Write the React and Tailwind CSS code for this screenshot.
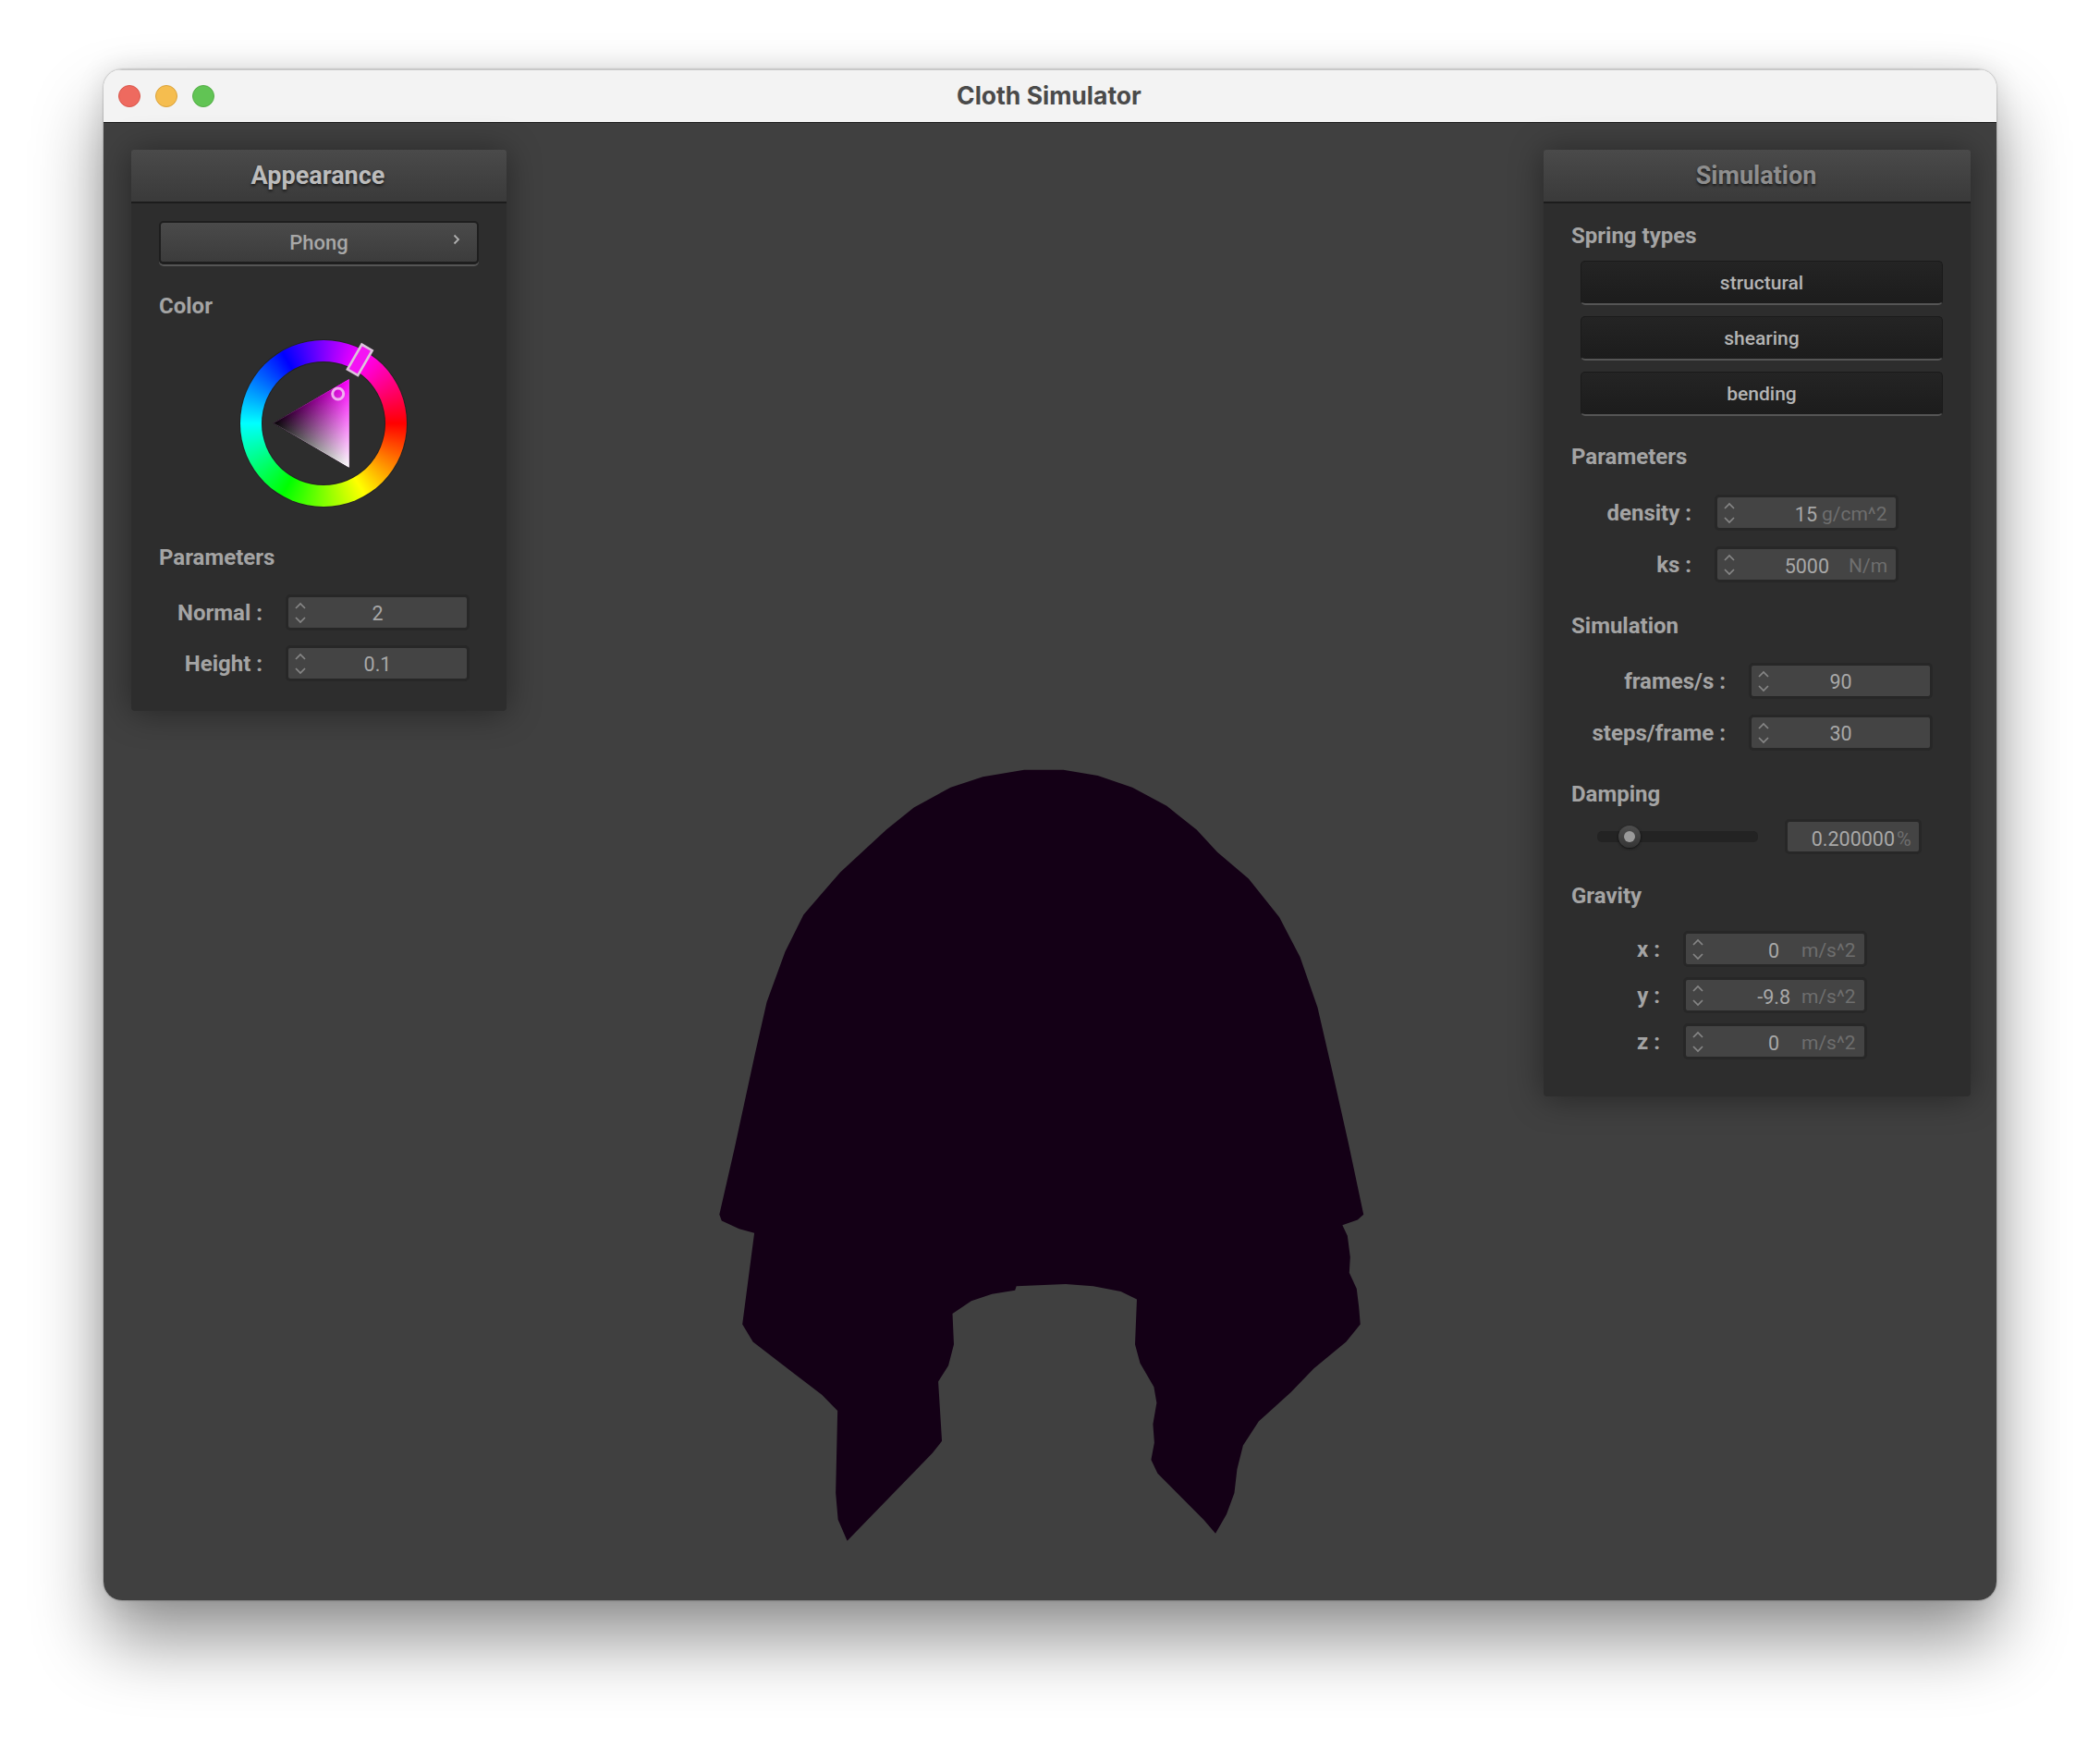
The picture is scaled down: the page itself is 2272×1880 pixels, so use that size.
const clothPoints =
  "740,57 825,57 900,68 975,90 1050,125 1115,170 1160,212 1228,262 1295,335 1340,410 1378,505 1410,625 1445,760 1478,895 1465,905 1432,915 1443,935 1449,975 1447,1005 1463,1035 1468,1070 1471,1102 1440,1135 1370,1185 1320,1230 1250,1285 1216,1330 1203,1375 1197,1420 1180,1460 1156,1496 1130,1470 1030,1383 1016,1357 1023,1325 1020,1290 1028,1250 1022,1220 992,1175 981,1140 985,1055 950,1040 890,1030 830,1026 723,1030 720,1038 670,1045 625,1058 584,1082 587,1140 575,1180 553,1210 561,1322 540,1345 355,1510 335,1470 330,1420 334,1265 300,1235 240,1195 150,1135 127,1102 153,930 120,922 82,907 77,895 110,770 155,590 180,495 220,400 260,330 295,295 340,250 440,170 500,128 580,90 650,70";

function Heading({ children, className = "" }) {
  return <div className={`h-[30px] leading-[30px] text-[24px] font-bold text-[#a4a4a4] ${className}`}>{children}</div>;
}

function PanelHeader({ children, dim }) {
  return (
    <div className="h-[58px] border-b-2 border-[#1c1c1c] rounded-t-[3px] bg-gradient-to-b from-[#4a4a4a] to-[#3a3a3a] flex items-center justify-center pr-[2px]">
      <span className={`text-[27px] font-bold [text-shadow:0_2px_3px_rgba(0,0,0,0.6)] ${dim ? "text-[#8e8e8e]" : "text-[#bcbcbc]"}`}>
        {children}
      </span>
    </div>
  );
}

function Spinner() {
  return (
    <svg className="absolute left-[6px] top-[4px]" width="14" height="26" viewBox="0 0 14 26" fill="none" stroke="#868686" strokeWidth="1.7">
      <path d="M2 8l5-5 5 5" />
      <path d="M2 18l5 5 5-5" />
    </svg>
  );
}

function Field({ children }) {
  return (
    <div className="relative h-[39px] w-[199px] shrink-0 rounded-[5px] border-[3px] border-[#272727] bg-[#444444] flex items-center text-[21.5px] text-[#a8a8a8] leading-none">
      <Spinner />
      {children}
    </div>
  );
}

function Centered({ value }) {
  return (
    <Field>
      <span className="w-full text-center pt-[3px]">{value}</span>
    </Field>
  );
}

function UnitField({ value, unit, valueEnd, unitStart }) {
  return (
    <Field>
      <span className="absolute top-[8px] text-right" style={{ right: valueEnd }}>{value}</span>
      <span className="absolute top-[8px] text-[21px] text-[#6e6e6e]" style={{ left: unitStart }}>{unit}</span>
    </Field>
  );
}

function Row({ label, labelWidth, gap, className = "", children }) {
  return (
    <div className={`flex items-center ${gap} ${className}`}>
      <div className={`${labelWidth} text-right text-[24px] font-bold text-[#a4a4a4] leading-[30px] whitespace-pre`}>{label}</div>
      {children}
    </div>
  );
}

function SpringButton({ children, className = "" }) {
  return (
    <div className={`ml-[10px] w-[392px] h-[48px] pt-[2px] rounded-[5px] border border-[#1a1a1a] border-b-2 border-b-[#555555] bg-gradient-to-b from-[#242424] to-[#1c1c1c] flex items-center justify-center text-[21px] font-medium text-[#b4b4b4] ${className}`}>
      {children}
    </div>
  );
}

function ColorWheel() {
  const triangle = "117.7,42 117.7,137.7 35.7,89.7";
  return (
    <div className="relative ml-[87px] mt-[22px] w-[180px] h-[180px] rounded-full bg-[conic-gradient(from_90deg,#ff0000,#ffff00,#00ff00,#00ffff,#0000ff,#ff00ff,#ff0000)] shadow-[0_0_0_1px_#222222]">
      <div className="absolute left-[24px] top-[24px] w-[132px] h-[132px] rounded-full bg-[#2d2d2d] shadow-[0_0_0_1px_#222222]" />
      <svg className="absolute left-0 top-0 isolate overflow-visible" width="180" height="180" viewBox="0 0 180 180">
        <defs>
          <linearGradient id="hue" gradientUnits="userSpaceOnUse" x1="117.7" y1="42" x2="76.7" y2="113.7">
            <stop offset="0" stopColor="#ff00ff" />
            <stop offset="1" stopColor="#000000" />
          </linearGradient>
          <linearGradient id="white" gradientUnits="userSpaceOnUse" x1="117.7" y1="137.7" x2="76.7" y2="65.9">
            <stop offset="0" stopColor="#ffffff" />
            <stop offset="1" stopColor="#000000" />
          </linearGradient>
        </defs>
        <polygon points={triangle} fill="#000000" stroke="#3a2a3a" strokeWidth="1" />
        <polygon points={triangle} fill="url(#hue)" className="mix-blend-plus-lighter" />
        <polygon points={triangle} fill="url(#white)" className="mix-blend-plus-lighter" />
        <circle cx="105.7" cy="58" r="6" fill="none" stroke="#f0b0f0" strokeWidth="3" />
        <g transform="translate(129.3 21.3) rotate(30)">
          <rect x="-6.5" y="-15.5" width="13" height="31" fill="#f414f4" stroke="#dcc4dc" strokeWidth="2.6" />
        </g>
      </svg>
    </div>
  );
}

function Slider() {
  return (
    <div className="relative w-[174px] h-[12px] ml-[28px] rounded-[5px] bg-[#232323]">
      <div className="absolute left-[23px] top-[-6px] w-[24px] h-[24px] rounded-full bg-gradient-to-b from-[#4e4e4e] to-[#353535] shadow-[0_1px_3px_rgba(0,0,0,0.7)] flex items-center justify-center">
        <div className="w-[12px] h-[12px] rounded-full bg-[#9a9a9a]" />
      </div>
    </div>
  );
}

export default function App() {
  return (
    <div className="w-[2272px] h-[1880px] bg-white overflow-hidden pt-[75px] pl-[112px] font-['Roboto',sans-serif]">
      <div className="w-[2048px] h-[1656px] rounded-[20px] shadow-[0_44px_76px_rgba(0,0,0,0.42),0_0_30px_rgba(0,0,0,0.12),0_0_2px_rgba(0,0,0,0.45)] overflow-hidden flex flex-col">
        <div className="relative h-[58px] shrink-0 bg-[#f3f3f3] border-t border-t-[#c8c8c8] border-b border-b-[#1a1a1a] flex items-center pl-[16px] gap-[16px]">
          <div className="w-[24px] h-[24px] rounded-full bg-[#ee6a5f] border border-[#d8574c]" />
          <div className="w-[24px] h-[24px] rounded-full bg-[#f5bd4f] border border-[#d9a23c]" />
          <div className="w-[24px] h-[24px] rounded-full bg-[#61c454] border border-[#54ad47]" />
          <div className="absolute inset-x-0 top-[11px] pr-[2px] text-center text-[26.5px] leading-[32px] font-bold text-[#4a4a4a] font-['Inter',sans-serif]">
            Cloth Simulator
          </div>
        </div>

        <div className="relative flex-1 bg-[#404040]">
          <svg className="absolute left-[628px] top-[667px]" width="780" height="900" viewBox="0 0 1568 1568" preserveAspectRatio="none">
            <polygon points={clothPoints} fill="#140016" />
          </svg>

          {/* Appearance window */}
          <div className="absolute left-[30px] top-[29px] w-[406px] rounded-[4px] bg-[#2d2d2d] shadow-[0_2px_36px_rgba(0,0,0,0.42)] pb-[32px]">
            <PanelHeader>Appearance</PanelHeader>
            <div className="pl-[30px]">
              <div className="relative mt-[19px] w-[346px] h-[47px] rounded-[5px] border-2 border-[#1e1e1e] border-b-[3px] bg-gradient-to-b from-[#4a4a4a] to-[#3c3c3c] shadow-[0_2px_0_#555555] flex items-center justify-center text-[22px] font-medium text-[#a8a8a8]">
                Phong
                <svg className="absolute right-[17px] top-[11px]" width="10" height="14" viewBox="0 0 10 14" fill="none" stroke="#b0b0b0" strokeWidth="1.8">
                  <path d="M2.5 2.5l4.5 4.5-4.5 4.5" />
                </svg>
              </div>
              <Heading className="mt-[30px]">Color</Heading>
              <div className="pl-[1px]">
                <ColorWheel />
              </div>
              <Heading className="mt-[40px]">Parameters</Heading>
              <Row label="Normal :" labelWidth="w-[112px]" gap="gap-[25px]" className="mt-[25px]">
                <Centered value="2" />
              </Row>
              <Row label="Height :" labelWidth="w-[112px]" gap="gap-[25px]" className="mt-[16px]">
                <Centered value="0.1" />
              </Row>
            </div>
          </div>

          {/* Simulation window */}
          <div className="absolute right-[28px] top-[29px] w-[462px] rounded-[4px] bg-[#2d2d2d] shadow-[0_2px_36px_rgba(0,0,0,0.42)] pb-[40px]">
            <PanelHeader dim>Simulation</PanelHeader>
            <div className="pl-[30px]">
              <Heading className="mt-[20px]">Spring types</Heading>
              <SpringButton className="mt-[12px]">structural</SpringButton>
              <SpringButton className="mt-[12px]">shearing</SpringButton>
              <SpringButton className="mt-[12px]">bending</SpringButton>
              <Heading className="mt-[29px]">Parameters</Heading>
              <Row label="density :" labelWidth="w-[130px]" gap="gap-[25px]" className="mt-[26px]">
                <UnitField value="15" unit="g/cm^2" valueEnd="85px" unitStart="113px" />
              </Row>
              <Row label="ks :" labelWidth="w-[130px]" gap="gap-[25px]" className="mt-[17px]">
                <UnitField value="5000" unit="N/m" valueEnd="72px" unitStart="142px" />
              </Row>
              <Heading className="mt-[32px]">Simulation</Heading>
              <Row label="frames/s :" labelWidth="w-[167px]" gap="gap-[25px]" className="mt-[25px]">
                <Centered value="90" />
              </Row>
              <Row label="steps/frame :" labelWidth="w-[167px]" gap="gap-[25px]" className="mt-[17px]">
                <Centered value="30" />
              </Row>
              <Heading className="mt-[32px]">Damping</Heading>
              <div className="mt-[12px] flex items-center">
                <Slider />
                <div className="relative ml-[29px] w-[148px] h-[38px] rounded-[5px] border-[3px] border-[#272727] bg-[#444444] text-[21.5px] leading-none">
                  <span className="absolute right-[26px] top-[8px] text-[#a8a8a8]">0.200000</span>
                  <span className="absolute left-[118px] top-[8px] text-[#6e6e6e]">%</span>
                </div>
              </div>
              <Heading className="mt-[30px]">Gravity</Heading>
              <Row label="x :" labelWidth="w-[96px]" gap="gap-[25px]" className="mt-[23px]">
                <UnitField value="0" unit="m/s^2" valueEnd="92px" unitStart="125px" />
              </Row>
              <Row label="y :" labelWidth="w-[96px]" gap="gap-[25px]" className="mt-[11px]">
                <UnitField value="-9.8" unit="m/s^2" valueEnd="80px" unitStart="125px" />
              </Row>
              <Row label="z :" labelWidth="w-[96px]" gap="gap-[25px]" className="mt-[11px]">
                <UnitField value="0" unit="m/s^2" valueEnd="92px" unitStart="125px" />
              </Row>
            </div>
          </div>
        </div>
      </div>
    </div>
  );
}
